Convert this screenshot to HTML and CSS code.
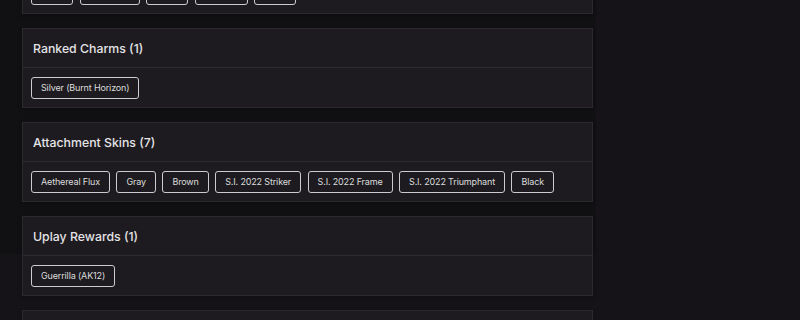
FILE: index.html
```html
<!DOCTYPE html>
<html lang="en">
<head>
    <meta charset="UTF-8">
    <meta name="viewport" content="width=device-width, initial-scale=1.0">
    <title>Unlocks</title>
    <link rel="stylesheet" href="styles.css">
</head>
<body>
    <div class="container">
        <div class="unlock-list">

            <div class="card">
                <div class="card-header">Weapon Skins (5)</div>
                <div class="card-body">
                    <span class="tag tag-w1"></span>
                    <span class="tag tag-w2"></span>
                    <span class="tag tag-w1"></span>
                    <span class="tag tag-w3"></span>
                    <span class="tag tag-w1"></span>
                </div>
            </div>

            <div class="card">
                <div class="card-header">Ranked Charms (1)</div>
                <div class="card-body">
                    <span class="tag">Silver (Burnt Horizon)</span>
                </div>
            </div>

            <div class="card">
                <div class="card-header">Attachment Skins (7)</div>
                <div class="card-body">
                    <span class="tag">Aethereal Flux</span>
                    <span class="tag">Gray</span>
                    <span class="tag">Brown</span>
                    <span class="tag">S.I. 2022 Striker</span>
                    <span class="tag">S.I. 2022 Frame</span>
                    <span class="tag">S.I. 2022 Triumphant</span>
                    <span class="tag">Black</span>
                </div>
            </div>

            <div class="card">
                <div class="card-header">Uplay Rewards (1)</div>
                <div class="card-body">
                    <span class="tag">Guerrilla (AK12)</span>
                </div>
            </div>

            <div class="card">
                <div class="card-header">Headgear (2)</div>
                <div class="card-body"></div>
            </div>

        </div>
    </div>
</body>
</html>
```

FILE: styles.css
```css
body {
    font-family: 'Inter', 'Noto Sans', sans-serif;
    margin: 0;
    background-color: #151317;
    color: #e4e3e6;
    height: 320px;
    overflow: hidden;
}

.container {
    width: 596px;
    height: 100%;
    background-color: #111013;
}

.unlock-list {
    display: flex;
    flex-direction: column;
    gap: 14px;
    margin-top: -66px;
    padding-left: 22px;
    width: 571px;
}

.card {
    background-color: #1d1b1f;
    border: 1px solid #2b292d;
    box-shadow: 0 2px 4px rgba(0,0,0,0.25);
}

.card-header {
    height: 38px;
    display: flex;
    align-items: center;
    padding-left: 10px;
    font-size: 12.3px;
    font-weight: 500;
    border-bottom: 1px solid #2e2c30;
}

.card-body {
    height: 39px;
    display: flex;
    align-items: center;
    gap: 6.5px;
    padding-left: 8px;
}

.tag {
    height: 20px;
    display: flex;
    align-items: center;
    padding: 0 9px;
    border: 1px solid #cdcbce;
    border-radius: 3px;
    font-size: 9px;
    letter-spacing: -0.15px;
    color: #dcdbde;
    white-space: nowrap;
}

.tag-w1 { width: 22px; }
.tag-w2 { width: 40px; }
.tag-w3 { width: 33px; }
```
